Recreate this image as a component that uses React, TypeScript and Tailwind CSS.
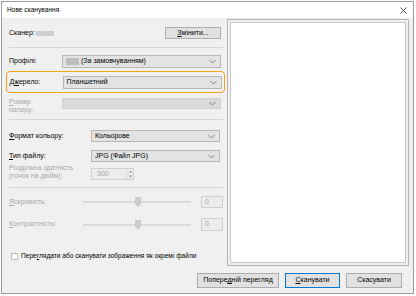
import React from "react"

const font = { fontFamily: '"Liberation Sans", "Noto Sans", sans-serif' }

const Chevron = () => (
  <svg width="7" height="5" viewBox="0 0 7 5" className="shrink-0">
    <polyline points="0.5,1 3.5,4 6.5,1" fill="none" stroke="#707070" strokeWidth="0.8" />
  </svg>
)

type SelectProps = {
  value?: React.ReactNode
  className?: string
  disabled?: boolean
}

const Select: React.FC<SelectProps> = ({ value, className = "", disabled }) => (
  <div
    className={`flex items-center justify-between border pl-[3px] pr-[4px] text-[7px] ${
      disabled ? "border-[#cfcfcf] bg-[#d9d9d9]" : "border-[#b8b8b8] bg-[#e3e3e3] text-black"
    } ${className}`}
  >
    <div className="flex items-center">{value}</div>
    <Chevron />
  </div>
)

const Separator = () => <div className="h-px bg-[#d7d7d7] mr-[4px]" />

const Slider = () => (
  <div className="relative h-[12px] w-[108px]">
    <div className="absolute left-0 right-0 top-[5px] h-[2px] bg-[#e0e0e0] border-t border-[#d6d6d6]" />
    <svg width="6" height="10" viewBox="0 0 6 10" className="absolute left-[52px] top-[1px]">
      <path d="M0.5 0.5 H5.5 V7 L3 9.5 L0.5 7 Z" fill="#cccccc" stroke="#c0c0c0" strokeWidth="0.6" />
    </svg>
  </div>
)

const App: React.FC = () => {
  return (
    <div className="w-[416px] h-[296px] bg-white pt-px pl-px" style={font}>
      <div className="w-[413px] h-[293px] border border-[#9c9c9c] flex flex-col bg-[#f0f0f0]">
        {/* title bar */}
        <div className="h-[16px] bg-white flex items-center justify-between pl-[5px] pr-[6px] shrink-0">
          <span className="text-[6.6px] text-black">Нове сканування</span>
          <svg width="7" height="7" viewBox="0 0 7 7">
            <path d="M0.5 0.5 L6.5 6.5 M6.5 0.5 L0.5 6.5" stroke="#333" strokeWidth="0.8" />
          </svg>
        </div>

        <div className="flex flex-1">
          {/* left column */}
          <div className="w-[225px] pl-[7px] pt-[9px] text-[7px] text-black">
            <div className="flex items-center justify-between h-[12px] pr-[6px]">
              <div className="flex items-center">
                <span>Сканер:</span>
                <span className="ml-[1px] inline-block w-[18px] h-[5px] bg-[#cfcfcf] blur-[0.6px]" />
              </div>
              <div className="w-[56px] h-[12px] border border-[#adadad] bg-[#e1e1e1] flex items-center justify-center">
                <span>
                  <u>З</u>мінити...
                </span>
              </div>
            </div>

            <div className="mt-[8px]">
              <Separator />
            </div>

            <div className="mt-[7px] flex items-center h-[13px]">
              <span className="w-[53px]">Профілі:</span>
              <Select
                className="w-[159px] h-[13px]"
                value={
                  <>
                    <span className="inline-block w-[13px] h-[7px] bg-[#bdbdbd] blur-[0.6px] mr-[2px]" />
                    <span>(За замовчуванням)</span>
                  </>
                }
              />
            </div>

            <div className="mt-[3px] -ml-[3px] w-[219px] h-[22px] border-[1.5px] border-[#f4a31b] rounded-[4px] flex items-center pl-[2.5px]">
              <span className="w-[53px]">
                Д<u>ж</u>ерело:
              </span>
              <Select className="w-[159px] h-[13px]" value="Планшетний" />
            </div>

            <div className="mt-[5px] flex items-start h-[17px]">
              <div className="w-[53px] text-[#a8a8a8] leading-[7.5px]">
                <div>
                  <u>Р</u>озмір
                </div>
                <div>паперу:</div>
              </div>
              <Select className="w-[159px] h-[11px]" disabled />
            </div>

            <div className="mt-[4px]">
              <Separator />
            </div>

            <div className="mt-[10px] flex items-center h-[12px]">
              <span className="w-[82px]">
                <u>Ф</u>ормат кольору:
              </span>
              <Select className="w-[129px] h-[12px]" value="Кольорове" />
            </div>

            <div className="mt-[8px] flex items-center h-[12px]">
              <span className="w-[82px]">
                <u>Т</u>ип файлу:
              </span>
              <Select className="w-[129px] h-[12px]" value="JPG (Файл JPG)" />
            </div>

            <div className="mt-[6px] flex items-start h-[17px]">
              <div className="w-[82px] text-[#a8a8a8] leading-[8px] -mt-[4px]">
                <div>Роздільна здатність</div>
                <div>(точок на дюйм):</div>
              </div>
              <div className="w-[43px] h-[12px] border border-[#d0d0d0] bg-[#ececec] flex items-center justify-between pl-[5px] text-[#a8a8a8]">
                <span>300</span>
                <div className="flex flex-col items-center justify-center w-[7px] h-full border-l border-[#dadada] gap-[2px]">
                  <svg width="5" height="3" viewBox="0 0 5 3">
                    <path d="M0.5 2.5 L2.5 0.5 L4.5 2.5 Z" fill="#9a9a9a" />
                  </svg>
                  <svg width="5" height="3" viewBox="0 0 5 3">
                    <path d="M0.5 0.5 L2.5 2.5 L4.5 0.5 Z" fill="#9a9a9a" />
                  </svg>
                </div>
              </div>
            </div>

            <div className="mt-[2px]">
              <Separator />
            </div>

            <div className="mt-[8px] flex items-center h-[12px] text-[#a8a8a8]">
              <span className="w-[74px]">
                <u>Я</u>скравість:
              </span>
              <Slider />
              <div className="ml-[10px] w-[22px] h-[12px] border border-[#d0d0d0] bg-[#ececec] flex items-center pl-[3px]">
                0
              </div>
            </div>

            <div className="mt-[10px] flex items-center h-[13px] text-[#a8a8a8]">
              <span className="w-[74px]">
                <u>К</u>онтрастність:
              </span>
              <Slider />
              <div className="ml-[10px] w-[22px] h-[13px] border border-[#d0d0d0] bg-[#ececec] flex items-center pl-[3px]">
                0
              </div>
            </div>

            <div className="mt-[21px] flex items-center h-[8px] ml-[2px]">
              <div className="w-[7px] h-[7px] border border-[#bdbdbd] bg-white" />
              <span className="ml-[3px] text-[6.6px]">
                Пере<u>г</u>лядати або сканувати зображення як окремі файли
              </span>
            </div>
          </div>

          {/* preview */}
          <div className="mt-[1px] w-[182px] h-[247px] border border-[#b4b4b4] p-[2px] bg-[#f0f0f0]">
            <div className="w-full h-full bg-white border border-[#c8c8c8]" />
          </div>
        </div>

        {/* bottom buttons */}
        <div className="flex justify-end gap-[6px] pr-[11px] pb-[5px] pt-[6px] text-[7px] text-black">
          <div className="w-[82px] h-[15px] border border-[#adadad] bg-[#e1e1e1] flex items-center justify-center">
            <span>
              Попере<u>д</u>ній перегляд
            </span>
          </div>
          <div className="w-[55px] h-[15px] border-[1.5px] border-[#0078d7] bg-[#e1e1e1] flex items-center justify-center">
            <span>
              <u>С</u>канувати
            </span>
          </div>
          <div className="w-[56px] h-[15px] border border-[#adadad] bg-[#e1e1e1] flex items-center justify-center">
            <span>Скасувати</span>
          </div>
        </div>
      </div>
    </div>
  )
}

export default App
